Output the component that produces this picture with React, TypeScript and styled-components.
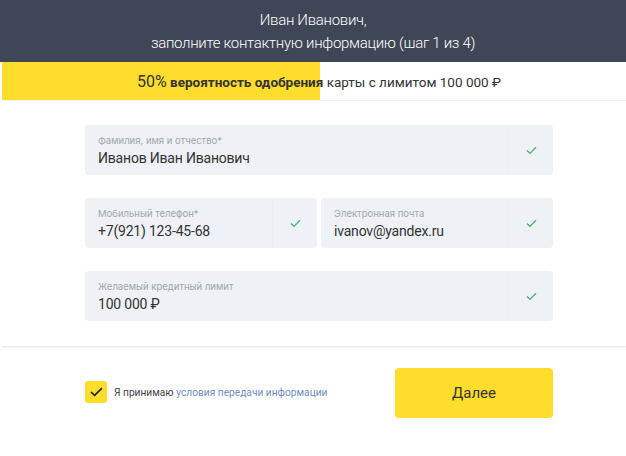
import React from 'react';
import styled, { createGlobalStyle } from 'styled-components';

const GlobalStyle = createGlobalStyle`
  body {
    margin: 0;
    background: #fff;
    font-family: Roboto, "Liberation Sans", sans-serif;
  }
`;

const Page = styled.div`
  width: 626px;
  height: 456px;
  background: #fff;
  overflow: hidden;
`;

const Header = styled.header`
  height: 62px;
  background: #3f4656;
  color: #fff;
  display: flex;
  flex-direction: column;
  align-items: center;
  justify-content: center;
  font-size: 15px;
  font-weight: 300;
  letter-spacing: -0.3px;
  line-height: 23px;
  padding-top: 1px;
  box-sizing: border-box;
`;

const ProgressBar = styled.div`
  position: relative;
  height: 38px;
  margin-left: 2px;
  display: flex;
  align-items: center;
  justify-content: center;
  color: #333;
  font-size: 13.5px;
  border-bottom: 1px solid #f0f0f0;
`;

const ProgressFill = styled.div<{ $percent: number }>`
  position: absolute;
  left: 0;
  top: 0;
  bottom: 0;
  width: ${(p) => p.$percent}%;
  background: #ffdd2d;
`;

const ProgressText = styled.span`
  position: relative;
  padding-left: 10px;

  b {
    font-weight: 700;
  }
`;

const Big = styled.span`
  font-size: 16px;
`;

const Form = styled.div`
  width: 468px;
  margin: 24px 0 0 85px;
  display: flex;
  flex-direction: column;
  gap: 23px;
`;

const Field = styled.div`
  height: 50px;
  background: #eef1f6;
  border-radius: 4px;
  display: flex;
  align-items: center;
  padding-left: 13px;
  box-sizing: border-box;
`;

const Row = styled.div`
  display: flex;
  gap: 4px;

  & > ${Field} {
    flex: 1 1 0;
  }
`;

const FieldBody = styled.div`
  flex: 1;
  display: flex;
  flex-direction: column;
  padding-top: 1px;
`;

const Label = styled.div`
  font-family: Inter, "Noto Sans", sans-serif;
  font-size: 9.5px;
  color: #a0a6ae;
  line-height: 13px;
  margin-bottom: 2px;
`;

const Value = styled.div`
  font-family: Roboto, "Liberation Sans", sans-serif;
  font-size: 14px;
  letter-spacing: -0.2px;
  color: #333;
  line-height: 18px;
`;

const CheckSlot = styled.div`
  width: 44px;
  align-self: stretch;
  display: flex;
  align-items: center;
  justify-content: center;
  border-left: 1px solid #ebeef3;
`;

const Divider = styled.div`
  height: 1px;
  margin: 25px 0 0 2px;
  background: #ececec;
  box-shadow: 0 1px 1px #f5f5f5;
`;

const Footer = styled.div`
  display: flex;
  align-items: center;
  justify-content: space-between;
  width: 468px;
  margin: 21px 0 0 85px;
`;

const Agree = styled.label`
  display: flex;
  align-items: center;
  gap: 7px;
  font-size: 10.2px;
  color: #444;
  margin-top: -2px;

  a {
    color: #6c8fbf;
    text-decoration: none;
  }
`;

const CheckBox = styled.span`
  width: 22px;
  height: 22px;
  border-radius: 3px;
  background: #ffdd2d;
  display: flex;
  align-items: center;
  justify-content: center;
`;

const Button = styled.button`
  width: 158px;
  height: 50px;
  border: none;
  border-radius: 4px;
  background: #ffdd2d;
  color: #333;
  font-family: Roboto, "Liberation Sans", sans-serif;
  font-size: 15px;
`;

const Check = () => (
  <svg width="11" height="9" viewBox="0 0 11 9">
    <path d="M1 4.6 L4 7.4 L10 1.2" fill="none" stroke="#4cae78" strokeWidth="1.3" />
  </svg>
);

const InputField = ({ label, value }: { label: string; value: string }) => (
  <Field>
    <FieldBody>
      <Label>{label}</Label>
      <Value>{value}</Value>
    </FieldBody>
    <CheckSlot>
      <Check />
    </CheckSlot>
  </Field>
);

export default function App() {
  return (
    <Page>
      <GlobalStyle />
      <Header>
        <div>Иван Иванович,</div>
        <div>заполните контактную информацию (шаг 1 из 4)</div>
      </Header>
      <ProgressBar>
        <ProgressFill $percent={50.9} />
        <ProgressText>
          <Big>50%</Big> <b>вероятность одобрения</b> карты с лимитом 100 000 ₽
        </ProgressText>
      </ProgressBar>
      <Form>
        <InputField label="Фамилия, имя и отчество*" value="Иванов Иван Иванович" />
        <Row>
          <InputField label="Мобильный телефон*" value="+7(921) 123-45-68" />
          <InputField label="Электронная почта" value="ivanov@yandex.ru" />
        </Row>
        <InputField label="Желаемый кредитный лимит" value="100 000 ₽" />
      </Form>
      <Divider />
      <Footer>
        <Agree>
          <CheckBox>
            <svg width="13" height="10" viewBox="0 0 13 10">
              <path d="M1 5 L4.6 8.4 L12 1.2" fill="none" stroke="#222" strokeWidth="1.7" />
            </svg>
          </CheckBox>
          <span>
            Я принимаю <a href="#">условия передачи информации</a>
          </span>
        </Agree>
        <Button>Далее</Button>
      </Footer>
    </Page>
  );
}
